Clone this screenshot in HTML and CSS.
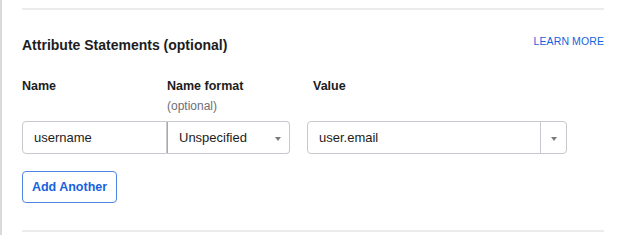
FILE: index.html
```html
<!DOCTYPE html>
<html>
<head>
<meta charset="utf-8">
<link rel="stylesheet" href="styles.css">
</head>
<body>
<div class="page">
  <div class="divider top"></div>
  <div class="header">
    <h2 class="title">Attribute Statements (optional)</h2>
    <a class="learn" href="#">LEARN MORE</a>
  </div>
  <div class="grid">
    <div class="label col-name">Name</div>
    <div class="label col-format">Name format<span class="sub">(optional)</span></div>
    <div class="label col-value">Value</div>
  </div>
  <div class="row">
    <div class="field name-field">username</div>
    <div class="field format-field"><span>Unspecified</span><span class="caret"></span></div>
    <div class="field value-field"><span class="value-text">user.email</span><span class="value-toggle"><span class="caret"></span></span></div>
  </div>
  <button class="add">Add Another</button>
  <div class="divider bottom"></div>
</div>
</body>
</html>
```
FILE: styles.css
```css
* { box-sizing: border-box; }
html, body { margin: 0; padding: 0; background: #fff; }
body {
  font-family: "Liberation Sans", Arial, sans-serif;
  color: #1d1d21;
  width: 624px;
  height: 235px;
  overflow: hidden;
}
.page {
  border-left: 2px solid #d9d9de;
  height: 235px;
  padding: 8px 20px 0 20px;
}
.divider {
  height: 2px;
  background: #ebebee;
  width: 582px;
}
.header {
  display: flex;
  justify-content: space-between;
  align-items: center;
  margin-top: 24px;
  height: 20px;
}
.title {
  margin: 0;
  font-size: 14px;
  font-weight: bold;
  line-height: 20px;
  position: relative;
  top: 1px;
}
.learn {
  align-self: flex-start;
  font-size: 10.5px;
  letter-spacing: 0.1px;
  color: #1662dd;
  text-decoration: none;
  line-height: 14px;
}
.grid {
  display: flex;
  margin-top: 24px;
  height: 43px;
}
.label {
  font-size: 12.5px;
  font-weight: bold;
  line-height: 16px;
}
.col-name { width: 145px; }
.col-format { width: 146px; display: flex; flex-direction: column; }
.sub {
  font-weight: normal;
  color: #6e6e78;
  font-size: 12px;
  margin-top: 4px;
}
.row {
  display: flex;
  height: 33px;
}
.field {
  border: 1px solid #c8c8ce;
  height: 33px;
  font-size: 13px;
  display: flex;
  align-items: center;
  padding: 0 11px;
}
.name-field {
  width: 145px;
  border-radius: 4px 0 0 4px;
}
.format-field {
  width: 123px;
  border-left: 1px solid #a8a8b0;
  border-radius: 0 4px 4px 0;
  justify-content: space-between;
  padding-right: 8px;
}
.value-field {
  width: 260px;
  margin-left: 17px;
  border-radius: 4px;
  padding: 0;
}
.value-text { flex: 1; padding-left: 11px; }
.value-toggle {
  width: 26px;
  height: 100%;
  border-left: 1px solid #c8c8ce;
  display: flex;
  align-items: center;
  justify-content: center;
}
.caret {
  width: 0;
  height: 0;
  border-left: 3px solid transparent;
  border-right: 3px solid transparent;
  border-top: 4px solid #7a7a82;
  margin-top: 2px;
}
.add {
  margin-top: 17px;
  height: 32px;
  width: 95px;
  border: 1px solid #4d86e3;
  border-radius: 4px;
  background: #fff;
  color: #1662dd;
  font-family: "Liberation Sans", Arial, sans-serif;
  font-weight: bold;
  font-size: 12.5px;
  padding: 0;
  display: block;
}
.divider.bottom {
  margin-top: 27px;
}
```
